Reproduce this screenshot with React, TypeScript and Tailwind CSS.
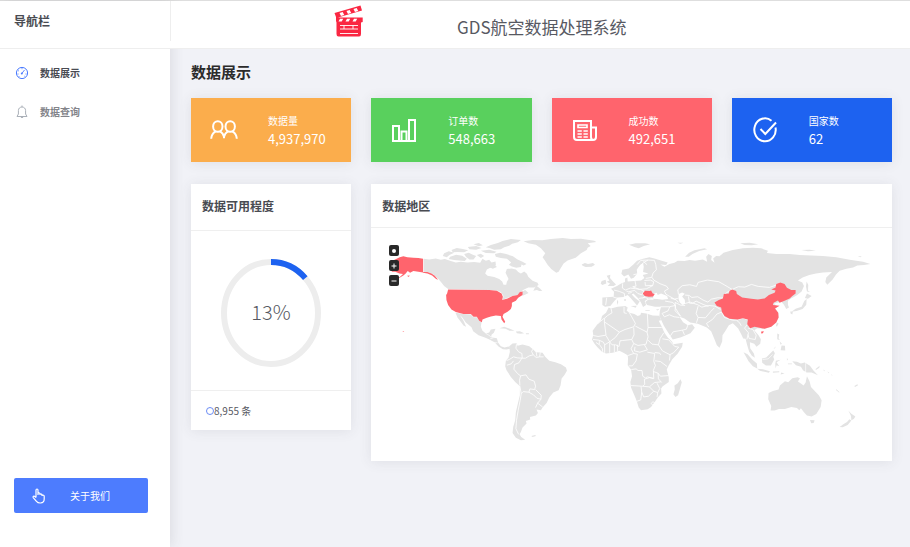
import React from 'react';

const stats = [
  { label: '数据量', value: '4,937,970', color: 'bg-[#fbad4c]', icon: <UsersIcon /> },
  { label: '订单数', value: '548,663', color: 'bg-[#59d05d]', icon: <ChartIcon /> },
  { label: '成功数', value: '492,651', color: 'bg-[#ff646d]', icon: <NewsIcon /> },
  { label: '国家数', value: '62', color: 'bg-[#1d62f0]', icon: <CheckIcon /> },
];

function UsersIcon() {
  return (
    <svg viewBox="0 0 28 28" className="h-7 w-7" fill="none" stroke="white" strokeWidth="2">
      <ellipse cx="7.800" cy="10.500" rx="4.700" ry="5.300" />
      <ellipse cx="20.200" cy="10.500" rx="4.700" ry="5.300" />
      <path d="M1.200 22.800c.2-3.600 1.800-6 4.300-7.500M10.200 15.300c2.200 1.300 3.300 3.200 3.800 5.500.5-2.300 1.600-4.200 3.800-5.500M22.500 15.300c2.500 1.500 4.100 3.900 4.300 7.500M14 19.500v2.700" />
    </svg>
  );
}

function ChartIcon() {
  return (
    <svg viewBox="0 0 28 28" className="h-7 w-7" fill="none" stroke="white" strokeWidth="2">
      <path d="M3 10h6v15H3zM11.500 15.500h5V25h-5zM19 4h6v21h-6zM9 25h10" />
    </svg>
  );
}

function NewsIcon() {
  return (
    <svg viewBox="0 0 28 28" className="h-7 w-7" fill="none" stroke="white" strokeWidth="2">
      <path d="M20 21V5H3v16q0 3 3 3h16q3 0 3-3v-9.500h-5V21q0 3 2.500 3" />
      <path d="M7 9h9v2.500H7zM6.500 15h4.300M6.500 18h4.300M6.500 21h4.300M12.500 15h4.300M12.500 18h4.300M12.500 21h4.300" strokeWidth="1.600" />
    </svg>
  );
}

function CheckIcon() {
  return (
    <svg viewBox="0 0 28 28" className="h-7 w-7" fill="none" stroke="white" strokeWidth="2">
      <path d="M20.500 4.700A10.700 11.500 0 1 0 24.500 11.500M9.500 13l4.800 5L25 6.500" />
    </svg>
  );
}

const DashboardIcon = () => (
  <svg viewBox="0 0 14 14" className="h-3.5 w-3.5" fill="none" stroke="#4a7bff">
    <circle cx="7" cy="7" r="5.600" />
    <circle cx="6.800" cy="7.500" r="1" fill="#4a7bff" stroke="none" />
    <path d="M6.800 7.500l2.700-3.500M7 2.200v1M3 4.500l.8.5M2.500 8h1M10.500 8h1M4 10.700l.6-.6M10 10.700l-.6-.6" strokeWidth=".9" />
  </svg>
);

const BellIcon = () => (
  <svg viewBox="0 0 14 14" className="h-3.5 w-3.5" fill="none" stroke="#aab0b8">
    <path d="M2 11.500h10L10.600 9V5.600C10.600 3.400 9 2 7 2S3.400 3.400 3.400 5.600V9zM5.500 11.700q1.500 2.300 3 0M7 .5V2" />
  </svg>
);

const HandIcon = () => (
  <svg viewBox="0 0 14 16" className="h-4 w-3.5" fill="none" stroke="white" strokeWidth="1.200" strokeLinejoin="round">
    <path d="M4 9.500V2.200q0-1.200 1-1.200t1 1.200V7M6 7V5q1.800-.5 2 .8V7M8 6.200q1.800-.6 2 .8v1M10 7.200q2-.5 2.200 1V11q0 3.700-3.700 4-2.500.2-4-1.600L1.200 9.600q-.5-1 .4-1.400.8-.2 1.400.5l1 1" />
  </svg>
);

const ClapperLogo = () => (
  <svg viewBox="0 0 30 32" className="h-8 w-[30px]">
    <path d="M.5 8L26.500.5 28 5.500 4 12.500h24.700V17l-1.700.5V29q0 2.500-2 2.500H4.500q-2 0-2-2.500V17.500L2 16V12z" fill="#fa2742" />
    <path d="M5.500 8l3.200-1 1.500 3-3.200 1zM12.500 6l3.200-1 1.500 3-3.200 1zM19.500 4l3.200-1 1.500 3-3.200 1zM6 13.800h3.200l-1.500 2.700H4.500zM13 13.800h3.200l-1.500 2.700h-3.200zM20 13.800h3.200l-1.500 2.700h-3.200z" fill="white" />
    <path d="M6 20.500h18M6 24h18M10 20.500V24M19 20.500V24M6 28.500h18" fill="none" stroke="white" strokeWidth=".9" />
  </svg>
);

const WorldMap = () => (
  <svg viewBox="0 0 1560 699" className="block w-full" role="img" aria-label="数据地区" fill="#e3e3e3" strokeLinejoin="round">
    {/* North America */}
    <g transform="translate(9 6)">
      <path d="M149 86L165 88 185 85 200 89 212 87 230 93 245 97 260 95 280 97 300 96 318 98 325 86 335 92 345 89 352 97 364 94 365 105 350 112 338 118 333 130 340 137 360 141 375 147 384 154 388 164 396 164 398 155 403 147 398 136 394 128 398 117 412 115 425 118 432 126 440 130 450 124 458 131 462 140 475 152 490 158 493 165 480 172 462 172 448 179 440 185 432 195 415 198 398 204 385 210 388 198 380 186 368 181 345 180 222 177 210 168 200 155 192 146 178 133 165 127 149 127z" />
      <path d="M443 185L453 180 463 189 454 193 445 197zM486 166L498 176 504 183 495 183 488 180 477 182z" />
      <path d="M210 70L224 64 240 68 226 75 218 82 206 78zM228 80L246 74 264 77 278 86 272 93 255 91 240 90 224 87zM232 60L248 54 266 57 282 61 270 67 250 66 236 67zM270 72L284 68 296 74 306 78 298 88 286 88 276 81zM308 75L320 71 330 78 320 84zM281 51L306 48 322 54 306 59 286 58zM320 62L345 59 367 65 360 70 335 69zM335 52L350 45 371 39 385 33 410 27 440 30 431 37 414 41 405 47 390 52 380 58 360 59 348 55zM298 43L314 39 326 46 314 49z" />
      <path d="M362 72L378 68 396 72 416 79 430 88 445 95 457 102 448 106 442 103 440 111 426 113 413 109 404 104 411 97 398 86 380 84 365 80zM348 100L362 104 368 111 356 116 344 111z" />
      <path d="M448 34L476 30 504 31 530 27 565 24 590 27 620 26 660 32 666 36 640 40 649 48 640 53 637 60 620 70 604 83 580 91 568 100 560 113 553 125 546 128 531 117 520 104 512 91 505 82 513 70 500 55 485 44 462 40z" />
      <path d="M244 248L268 252 290 253 298 261 308 261 315 272 322 276 320 290 325 302 335 310 345 307 350 298 364 296 359 308 352 314 351 321 368 324 372 338 380 348 391 352 403 349 409 355 397 358 386 357 373 349 361 336 344 327 332 322 313 315 297 303 292 291 275 277 264 261 257 255 268 272 276 290 268 286 257 271 250 262z" />
      <path d="M376 294L390 290 405 295 421 302 406 302 394 296zM425 304L437 303 450 309 439 311 428 309zM455 309h9v3h-9z" />
      <path d="M335 310L344 315 351 321M348 326L358 323M361 337L370 338" fill="none" stroke="white" strokeWidth="2" />
      <g fill="#ff646d">
        <path d="M147 86V127L133 125 118 123 108 128 101 123 95 130 88 136 73 145 63 150 78 140 87 132 76 130 64 125 54 125 50 118 62 112 52 101 67 97 73 92 60 90 77 82 88 79 100 82 118 83 133 84zM147 125L160 126 172 130 182 137 192 149 186 147 174 136 160 130 147 128z" />
        <path d="M222 178L345 180 368 182 382 190 386 200 384 210 400 205 415 198 430 195 437 186 445 184 445 195 432 203 425 212 413 218 413 228 410 237 400 245 388 252 385 260 393 275 390 279 382 268 380 258 365 256 350 259 338 263 325 268 323 276 315 272 308 260 298 260 290 252 268 252 245 246 232 238 222 225 217 210 216 195 219 190z" />
        <path d="M86 303h4v2h-4zM100 136l8 1-6 4z" />
      </g>
    </g>

    {/* South America */}
    <g transform="translate(354 306)">
      <path d="M60 48L70 40 82 39 85 47 100 43 120 48 132 58 140 66 160 68 168 80 180 92 198 96 215 102 230 112 233 122 225 135 217 145 214 165 208 180 192 187 180 202 172 218 160 232 155 240 142 238 146 248 140 256 122 260 123 268 110 272 112 280 100 292 95 305 91 312 96 320 108 328 95 330 80 322 70 308 72 290 78 270 80 245 86 220 92 195 92 168 78 155 65 140 52 120 48 108 50 92 58 82 62 65z" />
      <path d="M126 317l12-3 2 3-10 3z" />
      <path d="M82 42L80 54 88 65 98 70 99 84 84 83 73 80 60 88 52 91M98 84L89 98 76 103 74 117 85 130 94 137 91 150 92 166M94 137L110 134 119 147 135 153 139 168 136 178 122 176 119 186 102 184 96 190 92 168M96 190L93 210 87 240 82 270 80 295 88 312M119 186L133 194 143 204 155 207 156 195 139 178M155 207L145 219 139 232M144 218L160 230M99 84L109 84 120 77 132 74 127 64 131 57M132 74L141 82 151 80 163 80M141 66L143 79M153 67L151 80M53 105L66 101 73 92" fill="none" stroke="white" strokeWidth="2.500" />
    </g>

    {/* Europe and Asia */}
    <g transform="translate(609 6)">
      <path d="M225 82L240 85 262 92 280 97 275 105 258 103 270 110 285 102 300 98 310 92 330 93 345 90 362 92 385 88 398 95 395 80 402 72 412 78 410 90 420 98 416 85 425 78 435 79 447 68 475 60 505 55 535 53 560 55 580 62 577 69 605 72 645 72 675 75 745 78 785 82 825 89 865 95 887 102 868 105 848 106 835 112 815 116 795 122 784 133 774 148 758 164 752 156 755 142 772 126 745 127 724 130 704 135 684 142 670 151 683 157 688 168 681 184 668 195 650 205 640 213 640 224 643 232 635 237 628 224 620 215 607 218 598 221 609 229 603 236 611 248 612 262 605 277 590 290 570 296 548 294 539 300 552 315 559 327 557 341 546 350 539 341 526 336 527 354 538 370 541 383 532 377 524 365 518 345 513 326 506 325 500 312 491 295 475 279 463 285 453 302 444 315 443 334 435 353 427 345 420 327 410 303 397 292 370 281 347 277 330 265 315 260 326 276 340 285 353 282 361 293 348 309 320 321 295 328 281 307 268 286 255 258 256 244 260 230 242 230 218 225 213 216 222 208 238 209 234 204 222 206 211 213 215 225 206 231 199 216 189 202 177 190 172 193 182 204 196 214 188 226 181 218 170 205 160 195 147 201 130 202 120 213 108 228 92 230 84 225 84 202 118 200 119 185 110 176 128 168 140 160 152 156 152 145 159 142 160 154 179 153 200 151 210 144 205 135 222 130 206 126 208 110 206 99 197 105 187 119 189 130 178 143 170 146 162 133 149 139 141 131 144 119 163 115 177 103 188 92 206 86z" />
      <path d="M97 137L108 134 107 144 116 154 125 163 118 168 100 168 107 160 97 155 105 151zM82 153L94 149 96 160 84 165 79 160zM22 103L32 99 41 102 56 99 62 104 52 110 34 111 25 107zM164 44L184 40 212 40 227 43 208 48 193 55 180 51zM332 80L344 68 360 61 390 55 398 58 374 63 354 72 343 80zM497 40L525 38 551 43 532 46 510 45zM680 60L705 59 724 62 700 64zM849 79h12l-4 3zM309 38h18l-9 3zM128 208l4 8-4 9zM150 207l4 0 0 6-4 0zM169 228L187 227 184 233zM213 240h13v2h-13zM244 239l11-3-5 5z" />
      <path d="M696 154L701 165 700 181 706 186 697 184 694 169zM697 190L711 198 700 206 691 204zM696 207L695 224 684 237 666 243 651 245 663 236 681 230 689 213zM647 244l8 0-2 9-5-3zM607 277l5 3-5 10-3-4z" />
      <path d="M237 191L247 188 250 195 260 190 278 198 281 207 264 209 248 207 236 206zM313 192L323 187 331 191 323 199 331 209 332 221 325 225 316 217 312 205z" fill="white" />
      <path d="M177 134L190 131 193 114 207 98 221 90 240 91 244 103 246 119 236 129 232 142 214 145M188 104L199 91 221 90M218 104L207 94M233 142L238 150 257 161 276 168 282 176 270 183 274 192 300 207 310 205M210 151L228 150 238 155 235 166 213 167 212 156M182 153L185 168 175 170 195 178 216 176 236 166M145 160L144 174 153 180 168 174 184 176 198 178 209 183 202 194 190 190 181 181 163 185 156 183M119 180L135 184 150 190 151 201M97 203L94 225M117 201L135 206M172 187L161 190M205 204L215 196 233 196M193 205L213 202 222 206M312 193L310 179 323 167 346 164 366 169 371 157 399 150 433 155 449 164 466 174 473 178 462 184 451 192 446 204 430 203 411 207 400 216 386 210 370 200 352 202 344 196 332 195M473 178L491 170 511 171 531 163 551 169 585 172 602 166 617 158M342 199L345 219 354 220 365 213 386 223 402 229M332 220L347 216 370 224 382 231 403 226 421 228 438 238M332 226L318 225 302 217 303 234 318 258M371 228L365 250 371 262 366 278M371 262L393 263 408 245 420 233M403 291L396 280 414 268 427 252 441 246 450 262 474 270 488 270 505 263 520 269M487 271L496 279 500 287M520 281L510 294 522 308 517 328M521 294L535 298 545 315 542 328 524 325 520 313M272 213L295 217 303 226 285 230 258 230M303 226L302 242 319 259M286 230L281 242 263 250 270 260 285 254 299 260 315 262M288 317L296 305 324 300 336 297 340 285M324 300L330 314M289 204L305 209 312 217M641 213L653 205" fill="none" stroke="white" strokeWidth="2.500" />
      <path d="M205 190L212 182 226 183 230 181 235 190 241 192 236 199 223 200 211 198z" fill="#ff646d" />
    </g>
    <g transform="translate(954 6)" fill="#ff646d">
      <path d="M75 217L88 210 100 205 103 192 118 190 120 182 128 178 140 183 142 192 158 202 185 206 205 208 225 205 238 195 255 188 258 181 245 178 258 172 260 162 272 157 285 162 292 173 305 180 318 180 318 190 308 198 300 205 285 212 270 218 265 211 252 218 250 225 270 227 256 235 266 248 267 262 260 277 245 290 225 296 210 293 195 290 182 294 173 282 175 268 160 264 145 268 120 266 105 258 97 245 95 232 82 228zM215 304l8-1-3 6-5 1z" />
    </g>

    {/* Africa */}
    <g transform="translate(624 216)">
      <path d="M88 22L95 25 115 20 138 18 145 22 142 32 150 38 165 42 175 48 183 45 185 38 200 40 220 46 240 47 245 60 238 62 245 75 255 98 265 112 278 125 282 132 310 128 308 140 295 160 278 178 268 195 262 208 268 232 268 245 250 258 245 265 246 280 235 292 228 302 215 320 205 327 185 330 178 322 172 302 165 285 155 262 153 245 158 228 155 208 145 195 146 175 145 165 132 158 120 152 100 158 80 160 68 155 55 142 45 130 38 118 42 105 40 92 52 75 65 60 68 48 80 38z" />
      <path d="M303 237L307 246 303 260 296 285 288 290 282 282 286 268 285 256 295 249z" />
      <path d="M95 25L98 38 85 46 76 54 75 65 120 96 137 88 163 80 168 70 157 50 150 38M75 54L56 70M75 65L80 105 56 109 42 106M134 20L134 38 142 40M204 42L206 82 247 82M206 82L203 96 168 78M163 82L164 104 157 118 130 121 122 122 119 139 109 134 98 134 91 125 108 112 120 96M80 106L91 125 76 134 76 158M41 118L59 120 72 126 76 134M91 128L91 158M105 134L105 156M114 134L115 153M60 121L60 133 69 145 70 155M50 127L59 133M157 118L163 130 155 146 163 160 146 166M163 130L176 136 200 132 206 110 203 96M167 140L165 152 181 156 204 149 195 134M206 120L218 132 237 134 242 115 253 98M237 134L249 152 272 164 270 181M249 116L268 119 286 139 298 141 282 158 270 164M226 157L241 159 244 164M204 156L226 160 223 183 228 196 222 210 223 235 204 230 198 233 190 228 188 211 176 211 170 206 156 208M163 160L174 162 170 182 159 197 148 197M227 182L243 184 263 199M222 214L236 219 243 228 268 226M236 219L237 236 247 247M222 235L211 232 195 237 196 252 190 258 155 256M190 258L210 260 225 247 244 245M185 259L187 276 184 299 173 303M187 276L193 290 207 288 223 273 210 260M223 273L235 277 241 265 233 249M235 277L233 290M221 304l5 5-5 6-6-5z" fill="none" stroke="white" strokeWidth="2.500" />
    </g>

    {/* Southeast Asia and Oceania */}
    <g transform="translate(1104 276)">
      <path d="M87 218L100 212 117 208 121 196 136 183 146 186 158 174 174 171 181 174 175 184 192 196 198 187 202 168 210 184 214 200 226 213 238 226 246 240 243 260 230 281 216 289 202 286 193 276 184 264 179 270 172 263 155 260 136 266 118 266 105 271 93 271 95 257 86 237z" />
      <path d="M211 299L225 300 222 308 215 309zM326 271L334 280 347 289 342 296 335 300 334 287zM329 297L335 301 324 314 309 321 300 320 312 311 322 305z" />
      <path d="M12 96L24 102 38 118 52 130 53 145 40 138 27 123zM53 146L70 147 91 153 88 158 61 152zM67 115L80 112 94 98 101 91 106 99 101 110 104 118 94 136 79 136 68 128zM109 122L123 119 111 126 119 138 111 135 108 145 107 131zM158 123L172 125 184 130 195 127 211 137 222 152 235 165 216 157 201 157 190 150 184 140 169 135zM113 40L119 43 117 54 121 60 113 57zM120 63l7 8-4 3zM126 76L136 77 137 91 123 90zM109 78l-7 8 4-2zM100 154L119 153 119 156 100 158zM125 157l10 3-12 3zM142 113l3 6-3 2zM145 130h12v2h-12zM227 147L240 137 239 143 230 149zM250 148l6 4-2 1zM263 154l6 4-2 1zM273 162l6 3-2 1zM290 207l10 9-2 1-9-8zM344 197l9-5 2 3-9 5z" />
      <path d="M198 129V157M69 118L86 116 99 103" fill="none" stroke="white" strokeWidth="2" />
    </g>
  </svg>
);

export default function App() {
  return (
    <div className="flex min-h-screen border-t border-[#dedede] bg-[#f1f2f7] font-['Noto_Sans_CJK_SC','Noto_Sans',sans-serif] text-[#575962]">
      <aside className="relative z-10 flex w-[19%] max-w-[170px] shrink-0 flex-col bg-white shadow-[2px_0_12px_rgba(69,65,78,0.12)]">
        <div className="h-12 border-b border-[#eeeeee]">
          <div className="h-10 px-3.5 text-xs leading-10 font-bold text-[#494b52]">导航栏</div>
        </div>
        <nav className="flex flex-col gap-5 px-[15px] pt-3.5">
          <a href="#show" className="flex h-[19px] items-center gap-[11px] text-[10px] font-bold text-[#494b52]">
            <DashboardIcon />
            数据展示
          </a>
          <a href="#query" className="flex h-[19px] items-center gap-[11px] text-[10px] font-bold text-[#83848a]">
            <BellIcon />
            数据查询
          </a>
        </nav>
        <button className="mr-[22px] mb-[34px] ml-3.5 mt-auto flex h-[35px] items-center gap-6 rounded-xs bg-[#4d7cfe] px-[18px] text-[10px] text-white">
          <HandIcon />
          关于我们
        </button>
      </aside>

      <div className="flex min-w-0 flex-1 flex-col">
        <header className="relative z-20 flex h-12 border-b border-[#eeeeee] bg-white">
          <div className="flex h-10 items-center border-l border-[#eeeeee] pl-[163px]">
            <ClapperLogo />
          </div>
          <h1 className="self-center pt-1 pl-[93px] text-[17px] font-normal">GDS航空数据处理系统</h1>
        </header>

        <main className="pt-[11px] pr-[18px] pl-[21px]">
          <h2 className="text-[15px] leading-6 font-bold text-[#2b2b2b]">数据展示</h2>

          <div className="mt-3.5 grid grid-cols-4 items-start gap-x-5 gap-y-[22px]">
            {stats.map((stat) => (
              <div key={stat.label} className={`flex h-16 items-center gap-7 pl-[19px] text-white shadow-[0_1px_12px_rgba(69,65,78,0.1)] ${stat.color}`}>
                {stat.icon}
                <div className="pt-px pl-0.5">
                  <p className="text-[10px] leading-4">{stat.label}</p>
                  <p className="text-[13px] leading-5">{stat.value}</p>
                </div>
              </div>
            ))}

            <section className="bg-white shadow-[0_1px_12px_rgba(69,65,78,0.1)]">
              <h3 className="border-b border-[#efefef] px-[11px] pb-[3px] text-xs leading-[43px] font-bold text-[#494b52]">数据可用程度</h3>
              <div className="flex h-[159px] items-center justify-center pt-1">
                <svg viewBox="0 0 100 108" className="h-[108px] w-[100px]">
                  <ellipse cx="50" cy="54" rx="47" ry="51" fill="none" stroke="#ededed" strokeWidth="6" />
                  <path d="M50 3A47 51 0 0 1 84.300 19.100" fill="none" stroke="#1d62f0" strokeWidth="6" />
                  <text x="50" y="61" textAnchor="middle" fontSize="20" fontWeight="300" fill="#575962">13%</text>
                </svg>
              </div>
              <div className="flex h-10 items-center border-t border-[#efefef] pl-[15px] text-[10px]">
                <span className="h-2 w-2 rounded-full border border-[#6b8cf5]" />
                8,955 条
              </div>
            </section>

            <section className="col-span-3 bg-white shadow-[0_1px_12px_rgba(69,65,78,0.1)]">
              <h3 className="border-b border-[#efefef] px-[11px] text-xs leading-[43px] font-bold text-[#494b52]">数据地区</h3>
              <div className="relative">
                <WorldMap />
                <div className="absolute top-[17px] left-[18px] flex flex-col gap-1">
                  <button aria-label="重置" className="flex h-[11px] w-2.5 items-center justify-center rounded-xs bg-[#292929]">
                    <span className="h-1 w-1 rounded-full bg-white" />
                  </button>
                  <button aria-label="放大" className="flex h-[11px] w-2.5 items-center justify-center rounded-xs bg-[#292929] text-white">
                    <svg viewBox="0 0 6 6" className="h-1.5 w-1.5" stroke="currentColor"><path d="M.5 3h5M3 .5v5" /></svg>
                  </button>
                  <button aria-label="缩小" className="flex h-[11px] w-2.5 items-center justify-center rounded-xs bg-[#292929] text-white">
                    <svg viewBox="0 0 6 6" className="h-1.5 w-1.5" stroke="currentColor"><path d="M.5 3h5" /></svg>
                  </button>
                </div>
              </div>
            </section>
          </div>
        </main>
      </div>
    </div>
  );
}
